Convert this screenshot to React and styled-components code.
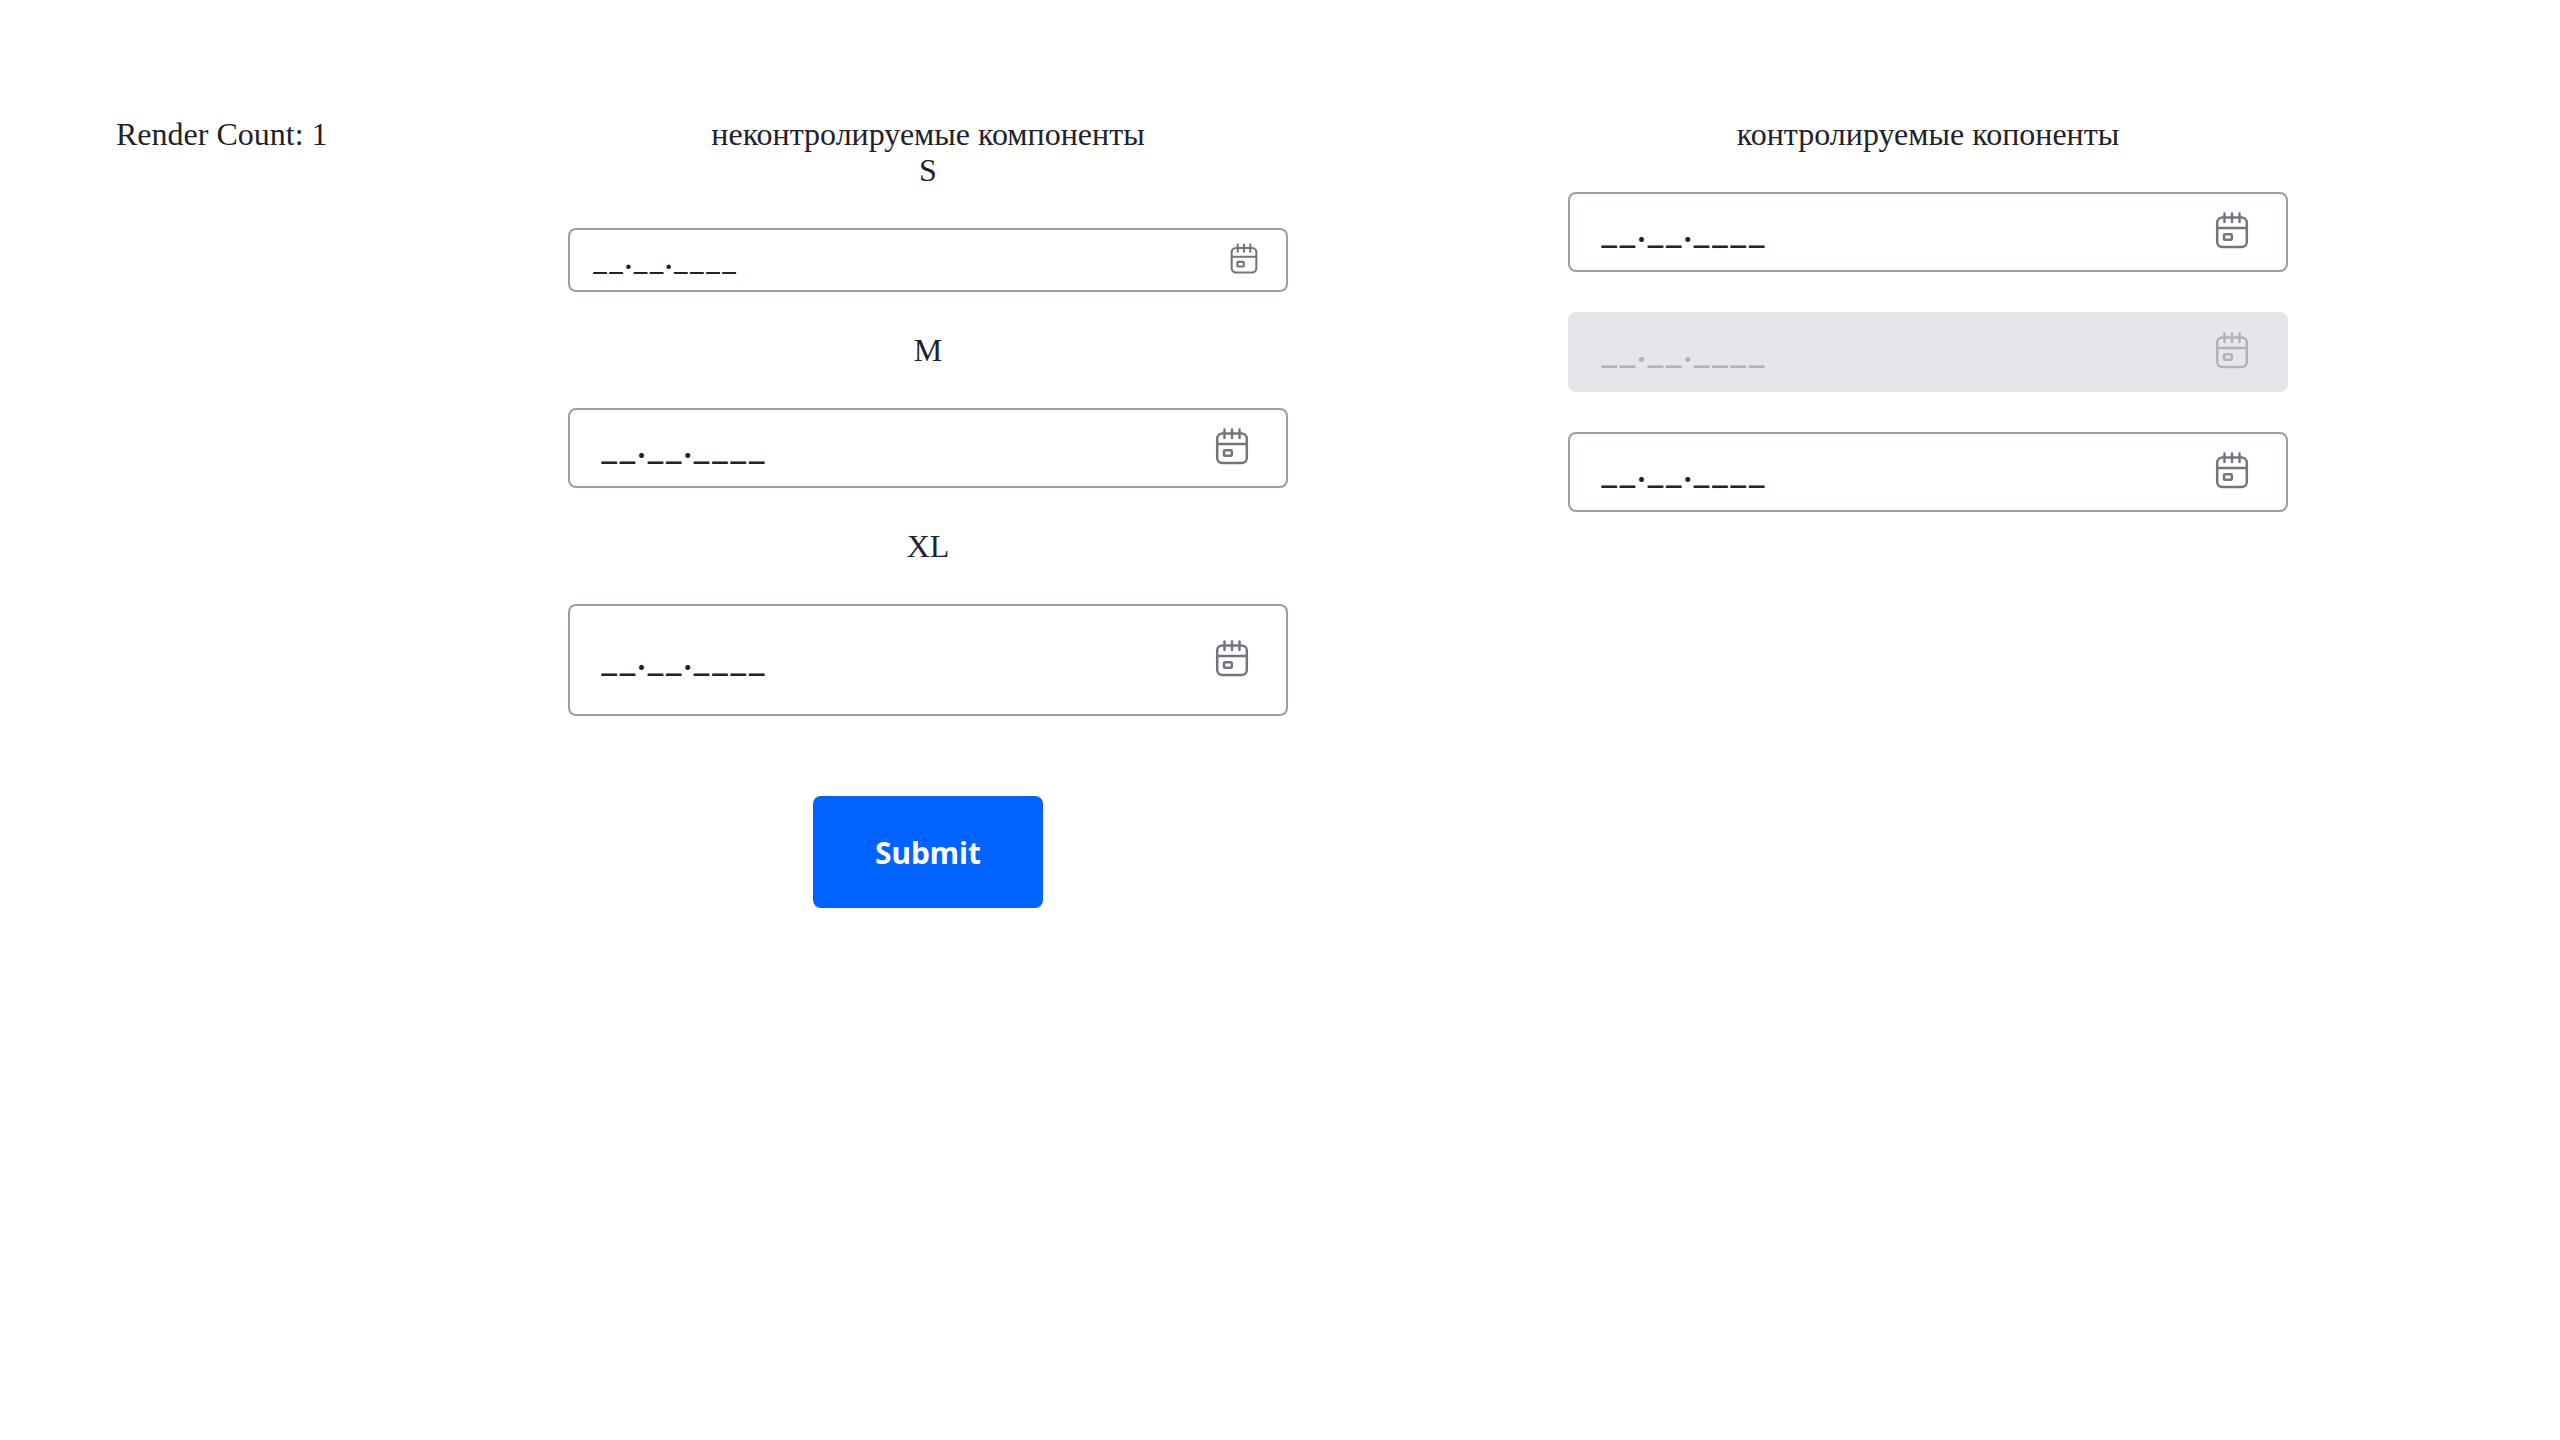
import React, { useState } from "react";
import styled, { createGlobalStyle } from "styled-components";

const GlobalStyle = createGlobalStyle`
  *, *::before, *::after {
    box-sizing: border-box;
  }
  body {
    margin: 0;
    background: #fff;
    color: #21222b;
    font-family: "Liberation Serif", "Times New Roman", serif;
    font-size: 32px;
    line-height: 36px;
  }
`;

const SIZES = {
  s: { height: 64, inset: 24, font: 35, icon: 40 },
  m: { height: 80, inset: 32, font: 40, icon: 48 },
  xl: { height: 112, inset: 32, font: 40, icon: 48 },
};

const Page = styled.main`
  display: grid;
  grid-template-columns: 312px 1fr 1fr;
  padding: 116px 132px 116px 116px;
`;

const Column = styled.section`
  display: flex;
  flex-direction: column;
  align-items: center;
  gap: 40px;
`;

const Form = styled(Column).attrs({ as: "form" })``;

const Heading = styled.div`
  text-align: center;
`;

const Title = styled.p`
  margin: 0;
`;

const FieldBox = styled.div`
  display: flex;
  align-items: center;
  width: 72%;
  height: ${(p) => SIZES[p.$size].height}px;
  padding: 0 ${(p) => SIZES[p.$size].inset - 2}px;
  border: 2px solid ${(p) => (p.$disabled ? "#e5e6ea" : "#999fa6")};
  border-radius: 8px;
  background: ${(p) => (p.$disabled ? "#e5e6ea" : "#fff")};
  color: ${(p) => (p.$disabled ? "#b1b2ba" : "#21222b")};
`;

const DateInput = styled.input`
  flex: 1;
  min-width: 0;
  padding: 0 0 10px;
  border: 0;
  outline: 0;
  background: transparent;
  color: inherit;
  font: 400 ${(p) => SIZES[p.$size].font}px/48px Lato, sans-serif;
`;

const CalendarButton = styled.button`
  display: flex;
  padding: 0;
  border: 0;
  background: none;
  color: ${(p) => (p.disabled ? "#b1b2ba" : "#73747f")};
  cursor: ${(p) => (p.disabled ? "default" : "pointer")};
`;

const SubmitButton = styled.button`
  min-width: 230px;
  height: 112px;
  margin-top: 40px;
  padding: 2px 60px 0;
  border: 0;
  border-radius: 8px;
  background: #0062ff;
  color: #fff;
  font: 700 30px/40px "Noto Sans", sans-serif;
  cursor: pointer;
`;

function CalendarIcon({ size }) {
  return (
    <svg
      width={size}
      height={size}
      viewBox="0 0 24 24"
      fill="none"
      stroke="currentColor"
      strokeWidth="1.25"
      strokeLinecap="round"
      aria-hidden="true"
    >
      <rect x="4.6" y="4.75" width="14.8" height="14.75" rx="2.5" />
      <path d="M4.6 10h14.8M8.25 2.75v4.25M12 2.75v4.25M15.75 2.75v4.25" />
      <rect x="8" y="13.1" width="3.9" height="2.8" rx="0.5" />
    </svg>
  );
}

function DateField({ label, size = "m", disabled = false, ...inputProps }) {
  return (
    <FieldBox $size={size} $disabled={disabled}>
      <DateInput
        type="text"
        inputMode="numeric"
        aria-label={label}
        $size={size}
        disabled={disabled}
        {...inputProps}
      />
      <CalendarButton type="button" aria-label="Календарь" disabled={disabled}>
        <CalendarIcon size={SIZES[size].icon} />
      </CalendarButton>
    </FieldBox>
  );
}

const MASK = "__.__.____";

export default function App() {
  const [first, setFirst] = useState(MASK);
  const [last, setLast] = useState(MASK);

  return (
    <>
      <GlobalStyle />
      <Page>
        <Title>Render Count: 1</Title>
        <Form onSubmit={(e) => e.preventDefault()}>
          <Heading>
            <Title>неконтролируемые компоненты</Title>
            <Title>S</Title>
          </Heading>
          <DateField label="S" size="s" defaultValue={MASK} />
          <Title>M</Title>
          <DateField label="M" size="m" defaultValue={MASK} />
          <Title>XL</Title>
          <DateField label="XL" size="xl" defaultValue={MASK} />
          <SubmitButton type="submit">Submit</SubmitButton>
        </Form>
        <Column>
          <Title>контролируемые копоненты</Title>
          <DateField label="Дата 1" value={first} onChange={(e) => setFirst(e.target.value)} />
          <DateField label="Дата 2" value={MASK} disabled readOnly />
          <DateField label="Дата 3" value={last} onChange={(e) => setLast(e.target.value)} />
        </Column>
      </Page>
    </>
  );
}
